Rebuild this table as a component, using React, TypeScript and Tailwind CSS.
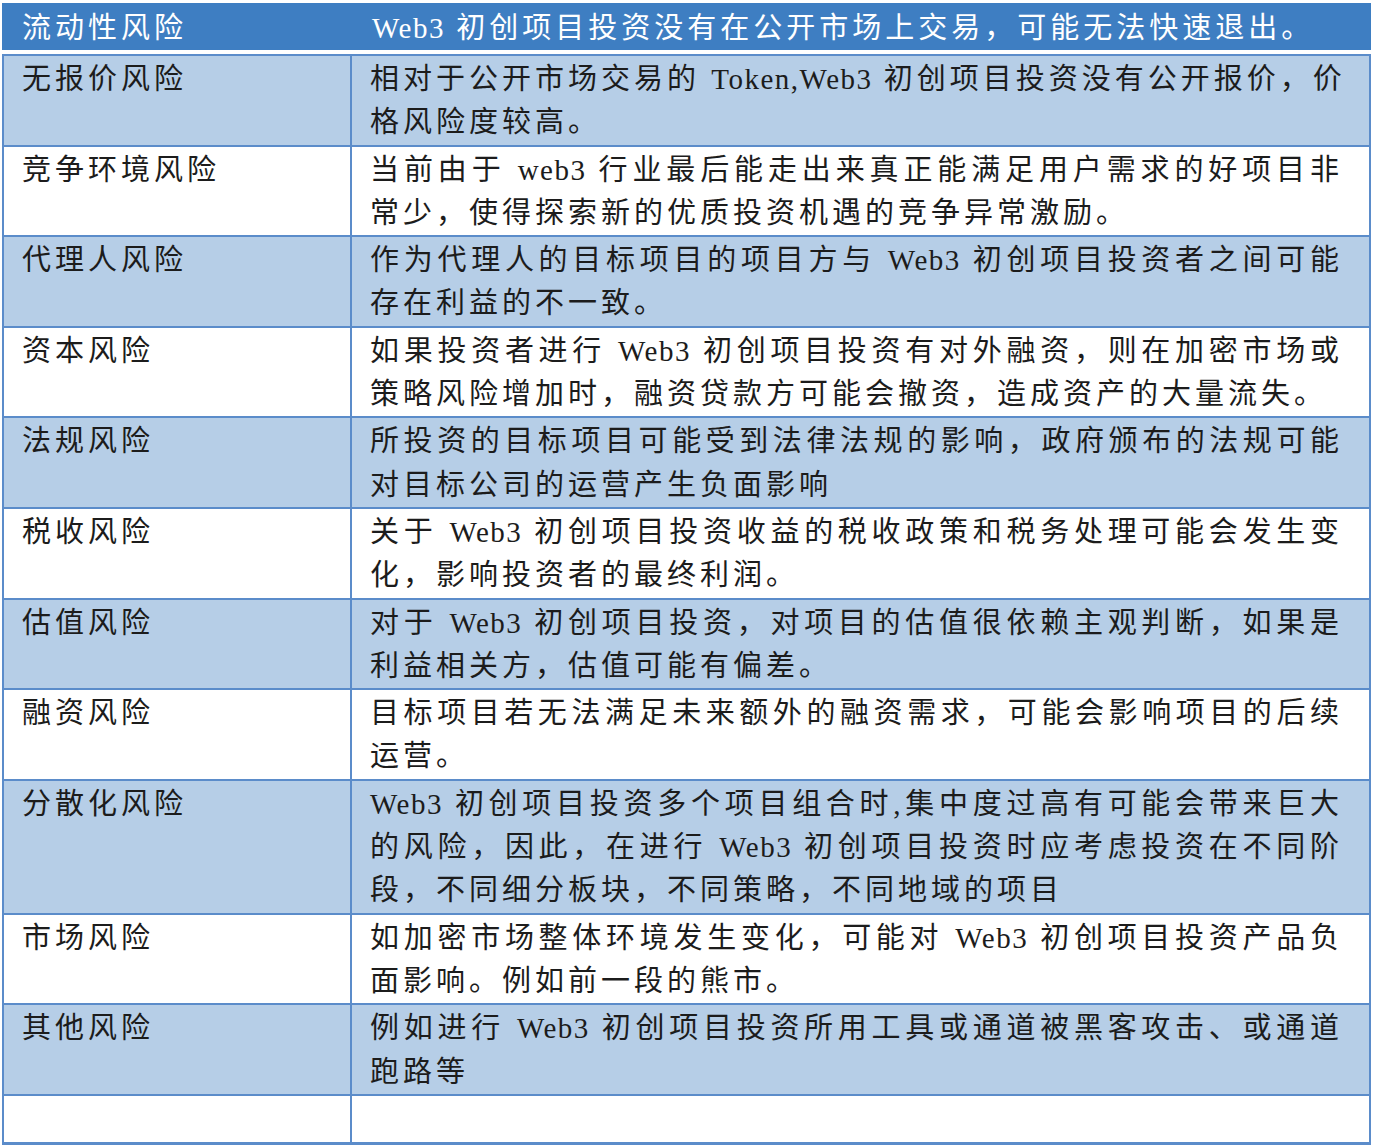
import React from "react";

type Row = { title: string; lines: string[] };

const rows: Row[] = [
  { title: "无报价风险", lines: ["相对于公开市场交易的 Token,Web3 初创项目投资没有公开报价，价", "格风险度较高。"] },
  { title: "竞争环境风险", lines: ["当前由于 web3 行业最后能走出来真正能满足用户需求的好项目非", "常少，使得探索新的优质投资机遇的竞争异常激励。"] },
  { title: "代理人风险", lines: ["作为代理人的目标项目的项目方与 Web3 初创项目投资者之间可能", "存在利益的不一致。"] },
  { title: "资本风险", lines: ["如果投资者进行 Web3 初创项目投资有对外融资，则在加密市场或", "策略风险增加时，融资贷款方可能会撤资，造成资产的大量流失。"] },
  { title: "法规风险", lines: ["所投资的目标项目可能受到法律法规的影响，政府颁布的法规可能", "对目标公司的运营产生负面影响"] },
  { title: "税收风险", lines: ["关于 Web3 初创项目投资收益的税收政策和税务处理可能会发生变", "化，影响投资者的最终利润。"] },
  { title: "估值风险", lines: ["对于 Web3 初创项目投资，对项目的估值很依赖主观判断，如果是", "利益相关方，估值可能有偏差。"] },
  { title: "融资风险", lines: ["目标项目若无法满足未来额外的融资需求，可能会影响项目的后续", "运营。"] },
  { title: "分散化风险", lines: ["Web3 初创项目投资多个项目组合时,集中度过高有可能会带来巨大", "的风险，因此，在进行 Web3 初创项目投资时应考虑投资在不同阶", "段，不同细分板块，不同策略，不同地域的项目"] },
  { title: "市场风险", lines: ["如加密市场整体环境发生变化，可能对 Web3 初创项目投资产品负", "面影响。例如前一段的熊市。"] },
  { title: "其他风险", lines: ["例如进行 Web3 初创项目投资所用工具或通道被黑客攻击、或通道", "跑路等"] },
];

const font = "[font-family:'Liberation_Serif','Noto_Sans_CJK_SC',serif]";

function Text({ s }: { s: string }) {
  const parts = s.split(/([A-Za-z0-9][A-Za-z0-9,.]*)/);
  return (
    <>
      {parts.map((p, i) =>
        /^[A-Za-z0-9]/.test(p) ? (
          <span key={i} className="tracking-[1.5px]">{p}</span>
        ) : (
          <React.Fragment key={i}>{p}</React.Fragment>
        )
      )}
    </>
  );
}

export default function App() {
  return (
    <div className={`bg-white w-[1374px] h-[1148px] pt-[3px] pl-[2px] ${font}`}>
      <div className="w-[1369px]">
        <div className="flex h-[47px] pt-[3px] bg-[#3e7ec2] text-white text-[29px] leading-[44px] tracking-[4px]">
          <div className="w-[350px] pl-[20px] shrink-0">流动性风险</div>
          <div className="pl-[20px]"><Text s="Web3 初创项目投资没有在公开市场上交易，可能无法快速退出。" /></div>
        </div>
        <div className="h-[6px] bg-white border-b-2 border-[#5b8cca]" />
        <div className="border-l-2 border-r-2 border-b-[3px] border-[#5b8cca] text-[#1c1c1c] text-[29px] leading-[43.3px] tracking-[4px]">
          {rows.map((r, i) => (
            <div
              key={i}
              className={`flex border-b-2 border-[#5b8cca] ${i % 2 === 0 ? "bg-[#b6cee7]" : "bg-white"}`}
            >
              <div className="w-[348px] shrink-0 pl-[18px] pt-[2px] border-r-2 border-[#5b8cca]">{r.title}</div>
              <div className="flex-1 pl-[18px] pr-[26px] pt-[2px]">
                {r.lines.map((l, j) => (
                  <div
                    key={j}
                    className={j < r.lines.length - 1 ? "text-justify [text-align-last:justify] whitespace-nowrap" : "whitespace-nowrap"}
                  >
                    <Text s={l} />
                  </div>
                ))}
              </div>
            </div>
          ))}
          <div className="flex h-[46px] bg-white">
            <div className="w-[348px] shrink-0 border-r-2 border-[#5b8cca]" />
            <div className="flex-1" />
          </div>
        </div>
      </div>
    </div>
  );
}
